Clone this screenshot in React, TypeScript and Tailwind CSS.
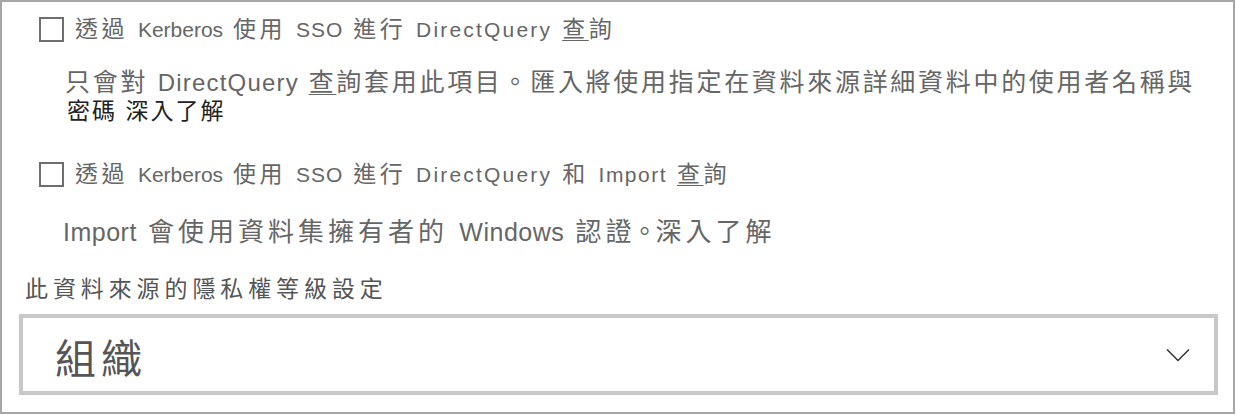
import type { ReactNode } from 'react';

const FONT = "font-['Liberation_Sans','Noto_Sans_CJK_TC',sans-serif]";

function Latin({ children, className = '' }: { children: ReactNode; className?: string }) {
  return <span className={className}>{children}</span>;
}

function Checkbox() {
  return <span className="block w-[25px] h-[25px] border-2 border-[#6e6e6e] bg-white flex-shrink-0" />;
}

function Chevron() {
  return (
    <svg width="24" height="14" viewBox="0 0 24 14" fill="none">
      <path d="M1 1.5 L12 12.5 L23 1.5" stroke="#333" strokeWidth="1.5" />
    </svg>
  );
}

function AccessKey({ children }: { children: ReactNode }) {
  return <span className="underline decoration-1 underline-offset-[3px]">{children}</span>;
}

export default function App() {
  return (
    <div className={`${FONT} w-[1235px] h-[414px] border-2 border-[#a6a6a6] bg-white pl-[17px] pt-[14px]`}>
      {/* Option 1 */}
      <label className="ml-[20px] flex items-center h-[26px] gap-[11px]">
        <Checkbox />
        <span className="text-[23px] tracking-[3.5px] text-[#666] whitespace-nowrap leading-none">
          透過 <Latin className="text-[21px] tracking-[0px]">Kerberos</Latin> 使用{' '}
          <Latin className="text-[21px] tracking-[1px]">SSO</Latin> 進行{' '}
          <Latin className="text-[21px] tracking-[2.2px]">DirectQuery</Latin> <AccessKey>查</AccessKey>詢
        </span>
      </label>

      <div className="ml-[46px] mt-[26px] leading-[29px] whitespace-nowrap">
        <div className="text-[25px] tracking-[2.7px] text-[#666]">
          只會對 <Latin className="text-[24px] tracking-[1.2px]">DirectQuery</Latin>{' '}
          <AccessKey>查</AccessKey>詢套用此項目。匯入將使用指定在資料來源詳細資料中的使用者名稱與
        </div>
        <div className="text-[23px] tracking-[2px] text-[#222] ml-[2px]">密碼 深入了解</div>
      </div>

      {/* Option 2 */}
      <label className="ml-[20px] mt-[35px] flex items-center h-[26px] gap-[11px]">
        <Checkbox />
        <span className="text-[23px] tracking-[3.5px] text-[#666] whitespace-nowrap leading-none">
          透過 <Latin className="text-[21px] tracking-[0px]">Kerberos</Latin> 使用{' '}
          <Latin className="text-[21px] tracking-[1px]">SSO</Latin> 進行{' '}
          <Latin className="text-[21px] tracking-[2.2px]">DirectQuery</Latin> 和{' '}
          <Latin className="text-[21px] tracking-[1.5px]">Import</Latin> <AccessKey>查</AccessKey>詢
        </span>
      </label>

      <div className="ml-[44px] mt-[30px] leading-[30px] whitespace-nowrap text-[26px] tracking-[4px] text-[#666]">
        <Latin className="text-[25px] tracking-[0.5px]">Import</Latin> 會使用資料集擁有者的{' '}
        <Latin className="text-[25px] tracking-[0.5px]">Windows</Latin> 認<span className="tracking-[0px]">證</span>
        <span className="tracking-[-2px]">。</span>深入了解
      </div>

      <div className="ml-[6px] mt-[27px] leading-[30px] whitespace-nowrap text-[23px] tracking-[4.9px] text-[#555]">
        此資料來源的隱私權等級設定
      </div>

      {/* Privacy level select */}
      <div className="mt-[10px] w-[1199px] h-[81px] border-4 border-[#c8c8c8] flex items-center justify-between pl-[32px] pr-[24px]">
        <span className="text-[41px] tracking-[5px] text-[#555] leading-none pt-[12px]">組織</span>
        <Chevron />
      </div>
    </div>
  );
}
